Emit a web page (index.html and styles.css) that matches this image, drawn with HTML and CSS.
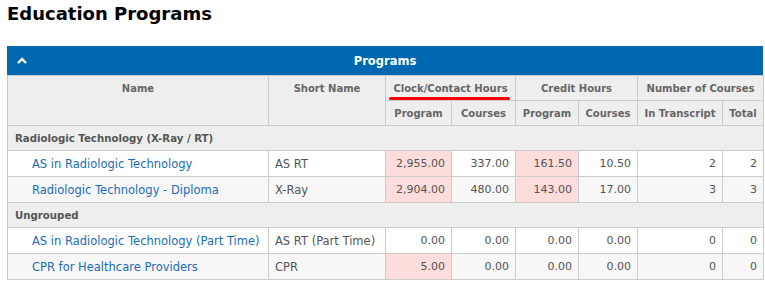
FILE: index.html
```html
<!DOCTYPE html>
<html>
<head>
<meta charset="utf-8">
<link rel="stylesheet" href="styles.css">
</head>
<body>
<h1 class="title">Education Programs</h1>
<div class="panel">
  <div class="panel-head">
    <svg class="chev" width="10" height="7" viewBox="0 0 10 7"><path d="M1 6 L5 2 L9 6" fill="none" stroke="#fff" stroke-width="2.4"/></svg>
    <span class="panel-title">Programs</span>
  </div>
  <table class="grid">
    <colgroup>
      <col class="c-name"><col class="c-short"><col class="c-cp"><col class="c-cc"><col class="c-hp"><col class="c-hc"><col class="c-it"><col class="c-tot">
    </colgroup>
    <thead>
      <tr>
        <th rowspan="2" class="top">Name</th>
        <th rowspan="2" class="top">Short Name</th>
        <th colspan="2"><span class="marked">Clock/Contact Hours</span></th>
        <th colspan="2">Credit Hours</th>
        <th colspan="2">Number of Courses</th>
      </tr>
      <tr>
        <th>Program</th><th>Courses</th><th>Program</th><th>Courses</th><th>In Transcript</th><th>Total</th>
      </tr>
    </thead>
    <tbody>
      <tr class="group"><td colspan="8">Radiologic Technology (X-Ray / RT)</td></tr>
      <tr class="odd">
        <td class="name"><a>AS in Radiologic Technology</a></td><td class="txt">AS RT</td>
        <td class="num pink">2,955.00</td><td class="num">337.00</td><td class="num pink">161.50</td><td class="num">10.50</td><td class="num">2</td><td class="num">2</td>
      </tr>
      <tr class="even">
        <td class="name"><a>Radiologic Technology - Diploma</a></td><td class="txt">X-Ray</td>
        <td class="num pink">2,904.00</td><td class="num">480.00</td><td class="num pink">143.00</td><td class="num">17.00</td><td class="num">3</td><td class="num">3</td>
      </tr>
      <tr class="group"><td colspan="8">Ungrouped</td></tr>
      <tr class="odd">
        <td class="name"><a>AS in Radiologic Technology (Part Time)</a></td><td class="txt">AS RT (Part Time)</td>
        <td class="num">0.00</td><td class="num">0.00</td><td class="num">0.00</td><td class="num">0.00</td><td class="num">0</td><td class="num">0</td>
      </tr>
      <tr class="even">
        <td class="name"><a>CPR for Healthcare Providers</a></td><td class="txt">CPR</td>
        <td class="num pink">5.00</td><td class="num">0.00</td><td class="num">0.00</td><td class="num">0.00</td><td class="num">0</td><td class="num">0</td>
      </tr>
    </tbody>
  </table>
</div>
</body>
</html>
```
FILE: styles.css
```css
html, body { margin: 0; padding: 0; background: #fff; }
body {
  font-family: Verdana, "DejaVu Sans", sans-serif;
  font-size: 11px;
  color: #555;
  padding: 0 0 0 7px;
}
.title {
  margin: 0;
  padding-top: 2px;
  height: 44px;
  font-size: 18px;
  font-weight: bold;
  color: #000;
  line-height: 24px;
}
.panel { width: 756px; }
.panel-head {
  background: #0067b1;
  height: 29px;
  display: flex;
  align-items: center;
  position: relative;
  justify-content: center;
}
.chev { position: absolute; left: 10px; top: 11px; }
.panel-title { color: #fff; font-weight: bold; font-size: 11.5px; }
.grid {
  width: 756px;
  border-collapse: collapse;
  table-layout: fixed;
}
.c-name { width: 261px; }
.c-short { width: 117px; }
.c-cp { width: 66px; }
.c-cc { width: 64px; }
.c-hp { width: 63px; }
.c-hc { width: 59px; }
.c-it { width: 85px; }
.c-tot { width: 41px; }
.grid th, .grid td {
  border: 1px solid #cccccc;
  height: 24px;
  padding: 0 6px;
  white-space: nowrap;
}
.grid th {
  background: #eeeeee;
  color: #666;
  font-weight: bold;
  font-size: 10px;
  text-align: center;
  vertical-align: middle;
}
.grid th.top { vertical-align: top; padding-top: 7px; }
.marked { position: relative; display: inline-block; }
.marked::after {
  content: "";
  position: absolute;
  left: -4px; right: -2px;
  bottom: -6px;
  height: 3px;
  border-radius: 2px;
  background: #f00;
}
.group td {
  background: #eeeeee;
  font-weight: bold;
  font-size: 10.2px;
  color: #555;
  padding-left: 7px;
  height: 24px;
}
.odd td { background: #fff; height: 25px; }
.even td { background: #f7f7f7; height: 25px; }
.grid td.name { padding-left: 24px; font-size: 11.5px; }
.grid td.txt { font-size: 11.5px; }
.name a { color: #1a6cb8; text-decoration: none; }
.grid td.num { text-align: right; }
.grid td.pink { background: #fddcdc; }
```
